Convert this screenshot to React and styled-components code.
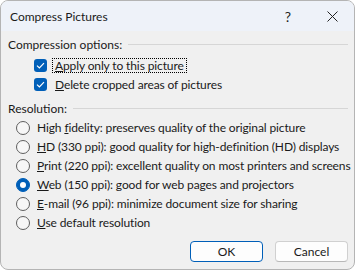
import styled, { createGlobalStyle } from "styled-components";

const GlobalStyle = createGlobalStyle`
  body {
    margin: 0;
    background: #ffffff;
    font-family: "Segoe UI", Lato, "Liberation Sans", sans-serif;
    font-size: 12px;
    color: #1a1a1a;
  }
`;

const Window = styled.div`
  width: 355px;
  height: 270px;
  box-sizing: border-box;
  border: 1px solid #b4b4b4;
  border-radius: 8px;
  overflow: hidden;
  background: #f0f0f0;
  display: flex;
  flex-direction: column;
`;

const TitleBar = styled.div`
  height: 30px;
  flex: none;
  display: flex;
  align-items: center;
  background: #eef2f9;
  padding-left: 9px;
`;

const Title = styled.span`
  flex: 1;
  font-size: 12px;
`;

const TitleButton = styled.div`
  width: 44px;
  height: 30px;
  display: flex;
  align-items: center;
  justify-content: center;
  font-size: 14px;
  color: #222;
`;

const Body = styled.div`
  flex: 1;
  display: flex;
  flex-direction: column;
  padding: 5px 6px 7px 7px;
`;

const GroupHeader = styled.div`
  display: flex;
  align-items: center;
  gap: 6px;
  height: 16px;
  white-space: nowrap;
  margin-top: ${(p) => p.$top || 0}px;

  &::after {
    content: "";
    flex: 1;
    height: 1px;
    background: #d6d6d6;
  }
`;

const List = styled.div`
  display: flex;
  flex-direction: column;
  padding-left: ${(p) => p.$indent}px;
  margin-top: ${(p) => p.$top}px;
`;

const Row = styled.div`
  display: flex;
  align-items: center;
  height: ${(p) => p.$h || 19}px;
  gap: ${(p) => p.$gap || 7}px;
  white-space: nowrap;
`;

const CheckBox = styled.span`
  flex: none;
  width: 13px;
  height: 13px;
  border-radius: 3px;
  background: #005fb8;
  display: flex;
  align-items: center;
  justify-content: center;
`;

const Radio = styled.span`
  flex: none;
  width: 12px;
  height: 12px;
  border-radius: 50%;
  border: 1px solid ${(p) => (p.$on ? "#005fb8" : "#5f5f5f")};
  background: ${(p) => (p.$on ? "#005fb8" : "#f7f7f7")};
  display: flex;
  align-items: center;
  justify-content: center;

  &::after {
    content: "";
    display: ${(p) => (p.$on ? "block" : "none")};
    width: 6px;
    height: 6px;
    border-radius: 50%;
    background: #ffffff;
  }
`;

const Label = styled.span`
  padding: 0 2px;
  border: 1px dotted ${(p) => (p.$focus ? "#000" : "transparent")};
  line-height: 13px;
  letter-spacing: -0.12px;
`;

const Footer = styled.div`
  margin-top: auto;
  display: flex;
  justify-content: flex-end;
  gap: 12px;
`;

const Button = styled.button`
  width: 73px;
  height: 21px;
  box-sizing: border-box;
  font-family: inherit;
  font-size: 12px;
  color: #1a1a1a;
  background: #fdfdfd;
  border: 1px solid ${(p) => (p.$primary ? "#005fb8" : "#d0d0d0")};
  border-bottom-color: ${(p) => (p.$primary ? "#005fb8" : "#b8b8b8")};
  border-radius: 4px;
  padding: 0;
`;

const Check = () => (
  <svg width="9" height="7" viewBox="0 0 9 7">
    <path d="M1 3.6 L3.4 6 L8 1.2" fill="none" stroke="#fff" strokeWidth="1.2" />
  </svg>
);

const options = [
  { pre: "High ", mid: "f", post: "idelity: preserves quality of the original picture" },
  { pre: "", mid: "H", post: "D (330 ppi): good quality for high-definition (HD) displays" },
  { pre: "", mid: "P", post: "rint (220 ppi): excellent quality on most printers and screens" },
  { pre: "", mid: "W", post: "eb (150 ppi): good for web pages and projectors", on: true },
  { pre: "", mid: "E", post: "-mail (96 ppi): minimize document size for sharing" },
  { pre: "", mid: "U", post: "se default resolution" },
];

export default function App() {
  return (
    <>
      <GlobalStyle />
      <Window>
        <TitleBar>
          <Title>Compress Pictures</Title>
          <TitleButton>?</TitleButton>
          <TitleButton>
            <svg width="11" height="11" viewBox="0 0 11 11">
              <path d="M0.5 0.5 L10.5 10.5 M10.5 0.5 L0.5 10.5" stroke="#222" strokeWidth="1" />
            </svg>
          </TitleButton>
        </TitleBar>
        <Body>
          <GroupHeader>Compression options:</GroupHeader>
          <List $indent={26} $top={4}>
            <Row $gap={5}>
              <CheckBox>
                <Check />
              </CheckBox>
              <Label $focus>
                <u>A</u>pply only to this picture
              </Label>
            </Row>
            <Row $gap={5}>
              <CheckBox>
                <Check />
              </CheckBox>
              <Label>
                <u>D</u>elete cropped areas of pictures
              </Label>
            </Row>
          </List>
          <GroupHeader $top={6}>Resolution:</GroupHeader>
          <List $indent={8} $top={2}>
            {options.map((o, i) => (
              <Row key={i} $gap={4}>
                <Radio $on={o.on} />
                <Label>
                  {o.pre}
                  <u>{o.mid}</u>
                  {o.post}
                </Label>
              </Row>
            ))}
          </List>
          <Footer>
            <Button $primary>OK</Button>
            <Button>Cancel</Button>
          </Footer>
        </Body>
      </Window>
    </>
  );
}
